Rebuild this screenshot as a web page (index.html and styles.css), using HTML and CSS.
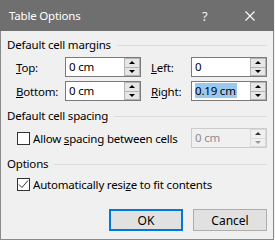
FILE: index.html
```html
<!DOCTYPE html>
<html lang="en">
<head>
  <meta charset="UTF-8" />
  <title>Table Options</title>
  <link rel="stylesheet" href="styles.css">
</head>
<body>
  <div class="dialog">
    <div class="titlebar">
      <span class="title">Table Options</span>
      <span class="help">?</span>
      <svg class="close" width="10" height="10" viewBox="0 0 10 10">
        <path d="M0.5 0.5 L9.5 9.5 M9.5 0.5 L0.5 9.5" stroke="#fff" stroke-width="1.1" fill="none"/>
      </svg>
    </div>

    <div class="content">
      <div class="group-head"><span>Default cell margins</span><span class="rule"></span></div>
      <div class="margins">
        <label><u>T</u>op:</label>
        <div class="spin"><span class="val">0 cm</span><span class="arrows"><i class="up"></i><i class="down"></i></span></div>
        <label><u>L</u>eft:</label>
        <div class="spin"><span class="val">0</span><span class="arrows"><i class="up"></i><i class="down"></i></span></div>
        <label><u>B</u>ottom:</label>
        <div class="spin"><span class="val">0 cm</span><span class="arrows"><i class="up"></i><i class="down"></i></span></div>
        <label><u>R</u>ight:</label>
        <div class="spin"><span class="val"><span class="selected">0.19 cm</span></span><span class="arrows"><i class="up"></i><i class="down"></i></span></div>
      </div>

      <div class="group-head spacing-head"><span>Default cell spacing</span><span class="rule"></span></div>
      <div class="spacing-row">
        <span class="check"></span>
        <span class="check-label">Allow <u>s</u>pacing between cells</span>
        <div class="spin disabled"><span class="val">0 cm</span><span class="arrows"><i class="up"></i><i class="down"></i></span></div>
      </div>

      <div class="group-head options-head"><span>Options</span><span class="rule"></span></div>
      <div class="option-row">
        <span class="check">
          <svg width="11" height="11" viewBox="0 0 11 11">
            <path d="M1 5.5 L4 8.5 L10 1.5" stroke="#333" stroke-width="1" fill="none"/>
          </svg>
        </span>
        <span class="check-label">Automatically resi<u>z</u>e to fit contents</span>
      </div>

      <div class="buttons">
        <button class="btn default">OK</button>
        <button class="btn">Cancel</button>
      </div>
    </div>
  </div>
</body>
</html>
```

FILE: styles.css
```css
* {
  box-sizing: border-box;
}

body {
  margin: 0;
  background: #f0f0f0;
  font-family: 'Noto Sans', 'Open Sans', sans-serif;
  font-size: 11.5px;
  letter-spacing: -0.2px;
  color: #000;
}

.dialog {
  width: 274px;
  height: 240px;
  background: #f0f0f0;
  border: 1px solid #8a8a8a;
  border-top: none;
  display: flex;
  flex-direction: column;
}

.titlebar {
  height: 31px;
  margin: 0 -1px;
  background: #6f6f6f;
  color: #fff;
  display: flex;
  align-items: center;
  padding-left: 9px;
}

.title {
  flex: 1;
}

.help {
  width: 20px;
  margin-right: 23px;
  font-size: 13px;
  color: #f0f0f0;
}

.close {
  margin-right: 19px;
}

.content {
  flex: 1;
  padding: 6px 6px 0 6px;
  display: flex;
  flex-direction: column;
}

.group-head {
  display: flex;
  align-items: center;
  height: 16px;
  line-height: 16px;
}

.rule {
  flex: 1;
  height: 1px;
  background: #dcdcdc;
  margin-left: 6px;
}

.margins {
  display: grid;
  grid-template-columns: 49px 86px 40px 76px;
  row-gap: 4px;
  margin-top: 4px;
  padding-left: 9px;
  align-items: center;
}

.margins .spin:nth-child(2),
.margins .spin:nth-child(6) {
  margin-right: 10px;
}

.spin {
  display: flex;
  height: 20px;
  border: 1px solid #7a7a7a;
  background: #fff;
}

.spin .val {
  flex: 1;
  padding-left: 3px;
  line-height: 18px;
}

.selected {
  background: #99c9ef;
  padding-right: 1px;
}

.arrows {
  width: 16px;
  display: flex;
  flex-direction: column;
}

.arrows i {
  flex: 1;
  display: flex;
  align-items: center;
  justify-content: center;
  background: #e6e6e6;
  border: 1px solid #b4b4b4;
}

.arrows i.down {
  border-top: none;
}

.arrows i::after {
  content: "";
  border-left: 3px solid transparent;
  border-right: 3px solid transparent;
}

.arrows i.up::after {
  border-bottom: 3px solid #000;
}

.arrows i.down::after {
  border-top: 3px solid #000;
}

.spin.disabled {
  width: 76px;
  border-color: #cccccc;
  background: #f0f0f0;
  color: #8d8d8d;
}

.spin.disabled .arrows i {
  background: #f0f0f0;
  border-color: #dadada;
}

.spin.disabled .arrows i.up::after {
  border-bottom-color: #333;
}

.spin.disabled .arrows i.down::after {
  border-top-color: #999;
}

.spacing-head {
  margin-top: 7px;
}

.spacing-row {
  display: flex;
  align-items: center;
  height: 20px;
  margin-top: 4px;
  padding-left: 10px;
}

.spacing-row .check-label {
  flex: 1;
}

.check {
  width: 13px;
  height: 13px;
  border: 1px solid #333;
  background: #fff;
  margin-right: 3px;
  display: flex;
  align-items: center;
  justify-content: center;
}

.options-head {
  margin-top: 8px;
}

.option-row {
  display: flex;
  align-items: center;
  height: 16px;
  margin-top: 4px;
  padding-left: 10px;
}

.buttons {
  display: flex;
  justify-content: flex-end;
  gap: 10px;
  margin-top: 17px;
}

.btn {
  width: 74px;
  height: 22px;
  padding: 0;
  background: #e1e1e1;
  border: 1px solid #adadad;
  font-family: inherit;
  font-size: 12px;
  color: #000;
}

.btn.default {
  border: 2px solid #0078d7;
}
```
